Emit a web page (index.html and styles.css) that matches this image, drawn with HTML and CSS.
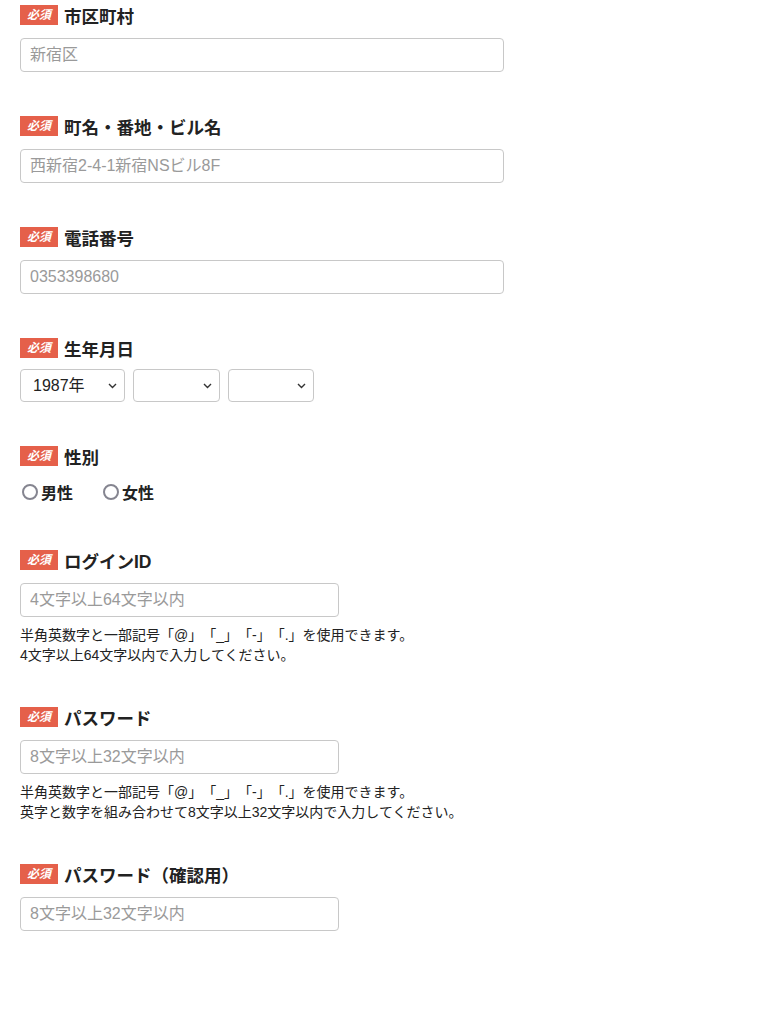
FILE: index.html
```html
<!DOCTYPE html>
<html lang="ja">
<head>
    <meta charset="UTF-8">
    <meta name="viewport" content="width=device-width, initial-scale=1.0">
    <title>会員登録</title>
    <link rel="stylesheet" href="styles.css">
</head>
<body>
    <form class="register-form">
        <div class="field">
            <div class="field-label"><span class="badge">必須</span>市区町村</div>
            <input type="text" class="text-input" placeholder="新宿区">
        </div>

        <div class="field">
            <div class="field-label"><span class="badge">必須</span>町名・番地・ビル名</div>
            <input type="text" class="text-input" placeholder="西新宿2-4-1新宿NSビル8F">
        </div>

        <div class="field">
            <div class="field-label"><span class="badge">必須</span>電話番号</div>
            <input type="text" class="text-input" placeholder="0353398680">
        </div>

        <div class="field">
            <div class="field-label"><span class="badge">必須</span>生年月日</div>
            <div class="birthday">
                <div class="select-wrap year">
                    <select class="select"><option>1987年</option></select>
                    <svg class="chevron" width="9" height="6" viewBox="0 0 9 6"><path d="M1 1l3.5 3.5L8 1" fill="none" stroke="#333" stroke-width="1.4"/></svg>
                </div>
                <div class="select-wrap month">
                    <select class="select"><option></option></select>
                    <svg class="chevron" width="9" height="6" viewBox="0 0 9 6"><path d="M1 1l3.5 3.5L8 1" fill="none" stroke="#333" stroke-width="1.4"/></svg>
                </div>
                <div class="select-wrap day">
                    <select class="select"><option></option></select>
                    <svg class="chevron" width="9" height="6" viewBox="0 0 9 6"><path d="M1 1l3.5 3.5L8 1" fill="none" stroke="#333" stroke-width="1.4"/></svg>
                </div>
            </div>
        </div>

        <div class="field gender-field">
            <div class="field-label"><span class="badge">必須</span>性別</div>
            <div class="radios">
                <label class="radio"><input type="radio" name="gender"><span>男性</span></label>
                <label class="radio"><input type="radio" name="gender"><span>女性</span></label>
            </div>
        </div>

        <div class="field help-field">
            <div class="field-label"><span class="badge">必須</span>ログインID</div>
            <input type="text" class="text-input short" placeholder="4文字以上64文字以内">
            <p class="help">半角英数字と一部記号「@」「_」「-」「.」を使用できます。<br>4文字以上64文字以内で入力してください。</p>
        </div>

        <div class="field help-field">
            <div class="field-label"><span class="badge">必須</span>パスワード</div>
            <input type="password" class="text-input short" placeholder="8文字以上32文字以内">
            <p class="help">半角英数字と一部記号「@」「_」「-」「.」を使用できます。<br>英字と数字を組み合わせて8文字以上32文字以内で入力してください。</p>
        </div>

        <div class="field">
            <div class="field-label"><span class="badge">必須</span>パスワード（確認用）</div>
            <input type="password" class="text-input short" placeholder="8文字以上32文字以内">
        </div>
    </form>
</body>
</html>
```

FILE: styles.css
```css
body {
    margin: 0;
    padding: 0;
    background: #fff;
    color: #222;
    font-family: "Liberation Sans", "Noto Sans CJK JP", sans-serif;
    text-spacing-trim: space-all;
}

.register-form {
    padding: 4px 20px 0;
    width: 484px;
}

.field {
    margin-bottom: 43px;
}

.field-label {
    display: flex;
    align-items: center;
    height: 22px;
    margin-bottom: 12px;
    font-size: 17.5px;
    font-weight: bold;
    color: #222;
}

.badge {
    display: inline-block;
    width: 38px;
    height: 20px;
    line-height: 20px;
    margin-right: 6px;
    background-color: #e5604a;
    color: #fff;
    font-size: 12px;
    font-style: italic;
    font-weight: bold;
    text-align: center;
}

.text-input {
    display: block;
    width: 484px;
    height: 34px;
    padding: 0 9px;
    border: 1px solid #c8c8c8;
    border-radius: 4px;
    font-family: inherit;
    font-size: 16px;
    color: #333;
    box-sizing: border-box;
}

.text-input.short {
    width: 319px;
}

.text-input::placeholder {
    color: #9a9a9a;
}

.birthday {
    display: flex;
    gap: 8px;
    margin-top: -2px;
}

.select-wrap {
    position: relative;
    height: 33px;
}

.select-wrap.year { width: 105px; }
.select-wrap.month { width: 87px; }
.select-wrap.day { width: 86px; }

.select {
    appearance: none;
    -webkit-appearance: none;
    width: 100%;
    height: 33px;
    padding: 0 12px;
    border: 1px solid #c8c8c8;
    border-radius: 4px;
    background: #fff;
    font-family: inherit;
    font-size: 16px;
    color: #222;
}

.chevron {
    position: absolute;
    right: 8px;
    top: 14px;
    pointer-events: none;
}

.gender-field {
    margin-bottom: 47px;
}

.radios {
    display: flex;
    gap: 28px;
    height: 20px;
    padding-top: 3px;
}

.radio {
    display: flex;
    align-items: center;
    font-size: 16px;
    font-weight: bold;
    color: #222;
}

.radio input {
    appearance: none;
    -webkit-appearance: none;
    width: 16px;
    height: 16px;
    margin: 0 3px 0 2px;
    border: 2px solid #858590;
    border-radius: 50%;
    box-sizing: border-box;
}

.help-field {
    margin-bottom: 41px;
}

.help {
    margin: 8px 0 0;
    font-size: 14px;
    line-height: 20px;
    color: #222;
}
```
